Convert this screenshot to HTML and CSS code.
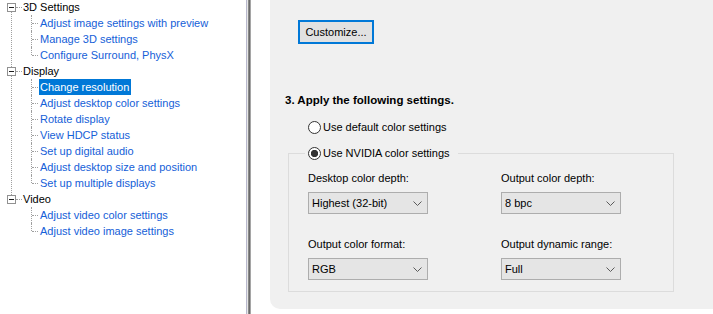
FILE: index.html
```html
<!DOCTYPE html>
<html lang="en">
<head>
    <meta charset="UTF-8">
    <title>NVIDIA Control Panel - Change resolution</title>
    <link rel="stylesheet" href="styles.css">
</head>
<body>
    <!-- Task tree -->
    <div class="tree-pane">
        <ul class="tree">
            <li class="node">
                <div class="row"><span class="toggle"></span><span class="dash"></span><span class="label">3D Settings</span></div>
                <ul class="children">
                    <li><span class="link">Adjust image settings with preview</span></li>
                    <li><span class="link">Manage 3D settings</span></li>
                    <li><span class="link">Configure Surround, PhysX</span></li>
                </ul>
            </li>
            <li class="node">
                <div class="row"><span class="toggle"></span><span class="dash"></span><span class="label">Display</span></div>
                <ul class="children">
                    <li><span class="link selected">Change resolution</span></li>
                    <li><span class="link">Adjust desktop color settings</span></li>
                    <li><span class="link">Rotate display</span></li>
                    <li><span class="link">View HDCP status</span></li>
                    <li><span class="link">Set up digital audio</span></li>
                    <li><span class="link">Adjust desktop size and position</span></li>
                    <li><span class="link">Set up multiple displays</span></li>
                </ul>
            </li>
            <li class="node">
                <div class="row"><span class="toggle"></span><span class="dash"></span><span class="label">Video</span></div>
                <ul class="children">
                    <li><span class="link">Adjust video color settings</span></li>
                    <li><span class="link">Adjust video image settings</span></li>
                </ul>
            </li>
        </ul>
    </div>

    <div class="splitter"></div>

    <!-- Page content -->
    <div class="main">
        <div class="panel">
            <button class="btn">Customize...</button>

            <h3 class="step">3. Apply the following settings.</h3>

            <label class="option option-top">
                <input type="radio" name="colorMode" class="radio">
                <span>Use default color settings</span>
            </label>

            <fieldset class="group">
                <legend>
                    <label class="option">
                        <input type="radio" name="colorMode" class="radio" checked>
                        <span>Use NVIDIA color settings</span>
                    </label>
                </legend>

                <div class="fields">
                    <div class="field">
                        <div class="field-label">Desktop color depth:</div>
                        <div class="combo">
                            <span>Highest (32-bit)</span>
                            <svg width="9" height="5" viewBox="0 0 9 5"><path d="M0.5 0.5 L4.5 4.5 L8.5 0.5" fill="none" stroke="#5a5a5a"/></svg>
                        </div>
                    </div>
                    <div class="field">
                        <div class="field-label">Output color depth:</div>
                        <div class="combo">
                            <span>8 bpc</span>
                            <svg width="9" height="5" viewBox="0 0 9 5"><path d="M0.5 0.5 L4.5 4.5 L8.5 0.5" fill="none" stroke="#5a5a5a"/></svg>
                        </div>
                    </div>
                    <div class="field">
                        <div class="field-label">Output color format:</div>
                        <div class="combo">
                            <span>RGB</span>
                            <svg width="9" height="5" viewBox="0 0 9 5"><path d="M0.5 0.5 L4.5 4.5 L8.5 0.5" fill="none" stroke="#5a5a5a"/></svg>
                        </div>
                    </div>
                    <div class="field">
                        <div class="field-label">Output dynamic range:</div>
                        <div class="combo">
                            <span>Full</span>
                            <svg width="9" height="5" viewBox="0 0 9 5"><path d="M0.5 0.5 L4.5 4.5 L8.5 0.5" fill="none" stroke="#5a5a5a"/></svg>
                        </div>
                    </div>
                </div>
            </fieldset>
        </div>
    </div>
</body>
</html>
```

FILE: styles.css
```css
/* Base */
body {
    margin: 0;
    display: flex;
    height: 314px;
    overflow: hidden;
    background: #fff;
    color: #000;
    font-family: "Liberation Sans", Arial, sans-serif;
    font-size: 11px;
}

/* Tree pane */
.tree-pane {
    width: 246px;
    flex: none;
    overflow: hidden;
}

.tree {
    list-style: none;
    margin: -1px 0 0;
    padding: 0;
}

.node {
    position: relative;
}

/* vertical line joining the top level boxes */
.node:not(:last-child)::before {
    content: "";
    position: absolute;
    left: 11px;
    top: 13px;
    bottom: -4px;
    border-left: 1px dotted #a0a0a0;
}

.row {
    display: flex;
    align-items: flex-start;
    height: 16px;
    padding-left: 7px;
}

.toggle {
    width: 7px;
    height: 7px;
    margin-top: 4px;
    border: 1px solid #919191;
    background: linear-gradient(#1e1e1e, #1e1e1e) center / 5px 1px no-repeat #fff;
}

.dash {
    width: 6px;
    margin-top: 8px;
    border-top: 1px dotted #a0a0a0;
}

.label {
    margin-left: 1px;
    line-height: 16px;
}

.children {
    list-style: none;
    margin: 0;
    padding: 0;
}

.children li {
    position: relative;
    height: 16px;
    padding-left: 39px;
}

.children li::before {
    content: "";
    position: absolute;
    left: 31px;
    top: 0;
    bottom: 0;
    border-left: 1px dotted #a0a0a0;
}

.children li:last-child::before {
    bottom: 8px;
}

.children li::after {
    content: "";
    position: absolute;
    left: 32px;
    top: 8px;
    width: 6px;
    border-top: 1px dotted #a0a0a0;
}

.link {
    display: inline-block;
    line-height: 16px;
    padding: 0 2px 0 1px;
    color: #1560d8;
}

.link.selected {
    background: #0078d7;
    color: #fff;
}

/* Splitter bar */
.splitter {
    width: 5px;
    flex: none;
    background: linear-gradient(to right, #b8b8cc 0 1px, #e6e6e6 1px 2px, #8a8a8a 2px 3px, #6a6a6a 3px 4px, #a5a5a5 4px 5px);
}

/* Content */
.main {
    flex: 1;
    padding-left: 19px;
}

.panel {
    box-sizing: border-box;
    height: 309px;
    padding: 20px 0 0 15px;
    background: #f0f0f0;
    border-bottom-left-radius: 10px;
}

.btn {
    display: block;
    width: 76px;
    height: 24px;
    margin-left: 13px;
    padding: 0;
    border: 2px solid #0078d7;
    background: #e1e1e1;
    color: #000;
    font: inherit;
}

.step {
    margin: 48px 0 0;
    font-size: 11.5px;
    font-weight: bold;
    line-height: 16px;
}

.option {
    display: flex;
    align-items: center;
    gap: 2px;
    height: 16px;
}

.option-top {
    margin: 11px 0 0 23px;
}

.radio {
    appearance: none;
    box-sizing: border-box;
    width: 13px;
    height: 13px;
    margin: 0;
    border: 1px solid #333;
    border-radius: 50%;
    background: #fff;
}

.radio:checked {
    background: radial-gradient(circle, #333 0 3.4px, #fff 3.9px);
}

/* Group box */
.group {
    box-sizing: border-box;
    width: 386px;
    min-width: 0;
    margin: 10px 0 0 3px;
    padding: 0 0 11px 16px;
    border: 1px solid #dcdcdc;
}

.group legend {
    padding: 0 8px 0 3px;
}

.fields {
    display: grid;
    grid-template-columns: 120px 120px;
    column-gap: 73px;
    row-gap: 23px;
    margin-left: 3px;
    padding-top: 10px;
}

.field-label {
    line-height: 14px;
}

.combo {
    box-sizing: border-box;
    display: flex;
    align-items: center;
    justify-content: space-between;
    height: 22px;
    margin-top: 7px;
    padding: 0 5px 0 3px;
    border: 1px solid #adadad;
    background: #e5e5e5;
}
```
